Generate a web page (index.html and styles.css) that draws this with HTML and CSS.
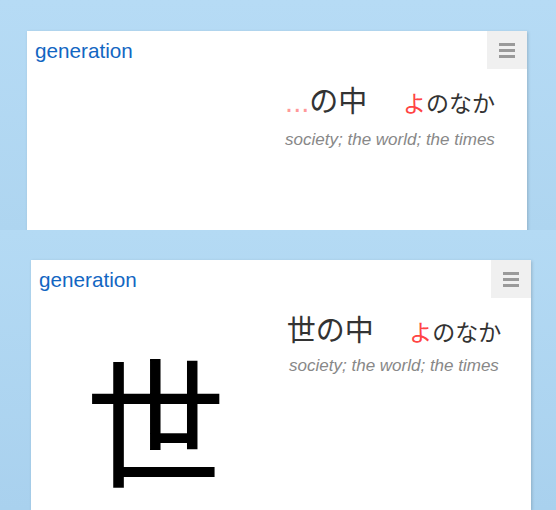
FILE: index.html
```html
<html>
  <head>
    <meta charset="utf-8">
    <meta name="viewport" content="width=device-width, initial-scale=1.0">
    <title>generation</title>
    <link rel="stylesheet" href="styles.css">
  </head>
  <body>
    <div class="shot shot-top">
      <div class="card">
        <div class="card-head">
          <span class="title">generation</span>
          <button class="menu"><span></span><span></span><span></span></button>
        </div>
        <div class="card-body">
          <div class="kanji-pane"></div>
          <div class="word-pane">
            <div class="word-line">
              <span class="word"><span class="pending">...</span>の中</span>
              <span class="reading"><span class="hl">よ</span>のなか</span>
            </div>
            <div class="meaning">society; the world; the times</div>
          </div>
        </div>
      </div>
    </div>
    <div class="shot shot-bottom">
      <div class="card">
        <div class="card-head">
          <span class="title">generation</span>
          <button class="menu"><span></span><span></span><span></span></button>
        </div>
        <div class="card-body">
          <div class="kanji-pane"><span class="kanji">世</span></div>
          <div class="word-pane">
            <div class="word-line">
              <span class="word">世の中</span>
              <span class="reading"><span class="hl">よ</span>のなか</span>
            </div>
            <div class="meaning">society; the world; the times</div>
          </div>
        </div>
      </div>
    </div>
  </body>
</html>
```
FILE: styles.css
```css
body {
  margin: 0;
  overflow: hidden;
  font-family: "Liberation Sans", Arial, sans-serif;
  background-color: #b3d9f3;
}

.shot {
  overflow: hidden;
}

.shot-top {
  height: 230px;
  padding: 31px 0 0 27px;
  box-sizing: border-box;
  background: linear-gradient(to bottom, #b6dbf5, #aed5f0);
}

.shot-bottom {
  height: 280px;
  padding: 30px 0 0 31px;
  box-sizing: border-box;
  background: linear-gradient(to bottom, #b4daf4, #a9d1ee);
}

.card {
  width: 500px;
  height: 250px;
  background-color: #fff;
  box-shadow: 1px 1px 3px rgba(0, 0, 0, 0.18);
}

.card-head {
  display: flex;
  justify-content: space-between;
  height: 38px;
}

.title {
  padding: 8px 0 0 8px;
  font-size: 20.7px;
  color: #1266c2;
}

.menu {
  width: 40px;
  height: 38px;
  padding: 0;
  border: none;
  background-color: #f0f0f0;
  display: flex;
  flex-direction: column;
  align-items: center;
  justify-content: center;
  gap: 3px;
}

.menu span {
  display: block;
  width: 16px;
  height: 3px;
  background-color: #9a9a9a;
}

.card-body {
  display: flex;
}

.kanji-pane {
  width: 226px;
  display: flex;
  justify-content: center;
}

.kanji {
  margin: 44px 0 0 23px;
  font-family: "Noto Sans CJK JP", sans-serif;
  font-size: 140px;
  line-height: 1.05;
  color: #000;
}

.word-pane {
  width: 274px;
  padding-top: 13px;
  text-align: center;
}

.word-line {
  line-height: 1.2;
  font-family: "Noto Sans CJK JP", sans-serif;
  color: #333;
}

.word {
  font-size: 29px;
  margin-right: 32px;
}

.pending {
  font-family: "Liberation Sans", Arial, sans-serif;
  color: #f99;
}

.reading {
  font-size: 23px;
}

.hl {
  color: #f44;
}

.meaning {
  margin-top: 10px;
  font-size: 17px;
  font-style: italic;
  color: #888;
}
```
